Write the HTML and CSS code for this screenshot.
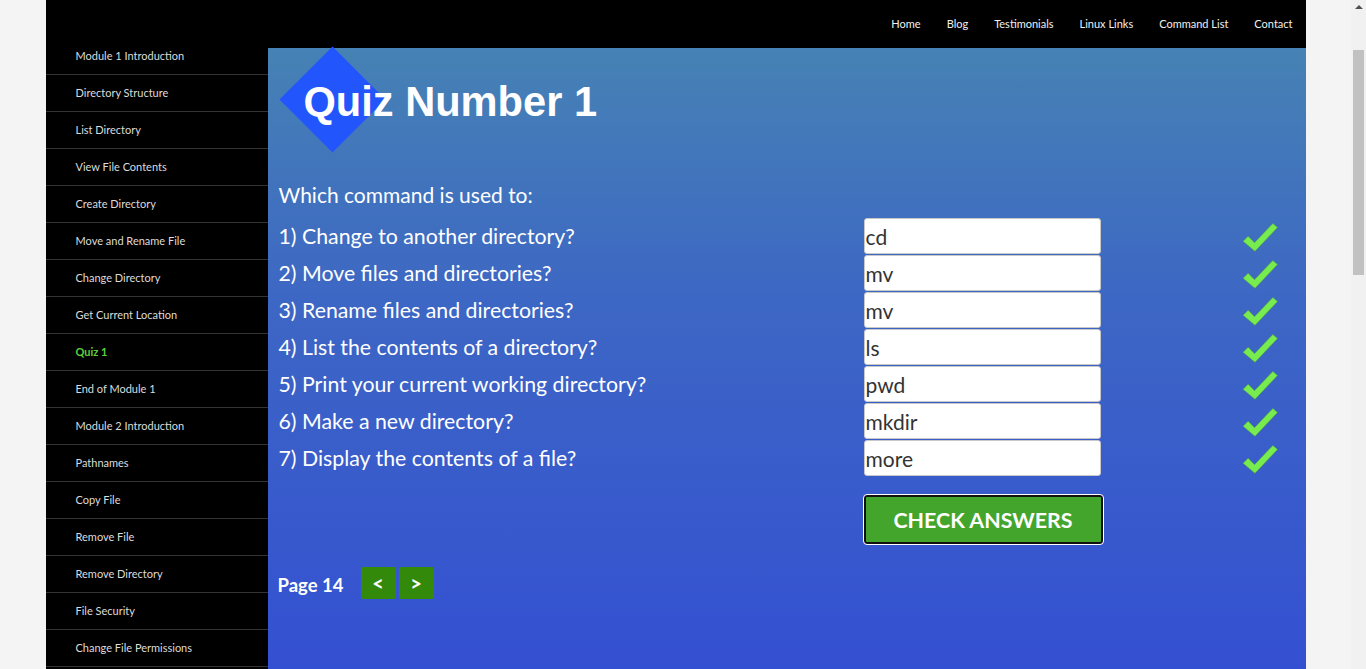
FILE: index.html
```html
<!DOCTYPE html>
<html lang="en">
<head>
<meta charset="utf-8">
<title>Quiz Number 1</title>
<link rel="stylesheet" href="styles.css">
</head>
<body>
<div class="viewport">
  <div class="page">
    <aside class="sidebar">
      <ul class="side-menu">
        <li><a href="#">Module 1 Introduction</a></li>
        <li><a href="#">Directory Structure</a></li>
        <li><a href="#">List Directory</a></li>
        <li><a href="#">View File Contents</a></li>
        <li><a href="#">Create Directory</a></li>
        <li><a href="#">Move and Rename File</a></li>
        <li><a href="#">Change Directory</a></li>
        <li><a href="#">Get Current Location</a></li>
        <li class="active"><a href="#">Quiz 1</a></li>
        <li><a href="#">End of Module 1</a></li>
        <li><a href="#">Module 2 Introduction</a></li>
        <li><a href="#">Pathnames</a></li>
        <li><a href="#">Copy File</a></li>
        <li><a href="#">Remove File</a></li>
        <li><a href="#">Remove Directory</a></li>
        <li><a href="#">File Security</a></li>
        <li><a href="#">Change File Permissions</a></li>
      </ul>
    </aside>
    <div class="main">
      <header class="topbar">
        <nav class="top-nav">
          <a href="#">Home</a>
          <a href="#">Blog</a>
          <a href="#">Testimonials</a>
          <a href="#">Linux Links</a>
          <a href="#">Command List</a>
          <a href="#">Contact</a>
        </nav>
      </header>
      <section class="content">
        <div class="title-wrap">
          <span class="diamond"></span>
          <h1 class="title">Quiz Number 1</h1>
        </div>
        <p class="intro">Which command is used to:</p>
        <div class="quiz">
          <div class="q">1) Change to another directory?</div>
          <input class="answer" type="text" value="cd">
          <div class="mark"><svg viewBox="0 0 40 36" class="tick"><path d="M1 21 L6.5 15.5 L13.5 22.5 L33.5 1.5 L38.5 6 L14 32 Z"/></svg></div>

          <div class="q">2) Move files and directories?</div>
          <input class="answer" type="text" value="mv">
          <div class="mark"><svg viewBox="0 0 40 36" class="tick"><path d="M1 21 L6.5 15.5 L13.5 22.5 L33.5 1.5 L38.5 6 L14 32 Z"/></svg></div>

          <div class="q">3) Rename files and directories?</div>
          <input class="answer" type="text" value="mv">
          <div class="mark"><svg viewBox="0 0 40 36" class="tick"><path d="M1 21 L6.5 15.5 L13.5 22.5 L33.5 1.5 L38.5 6 L14 32 Z"/></svg></div>

          <div class="q">4) List the contents of a directory?</div>
          <input class="answer" type="text" value="ls">
          <div class="mark"><svg viewBox="0 0 40 36" class="tick"><path d="M1 21 L6.5 15.5 L13.5 22.5 L33.5 1.5 L38.5 6 L14 32 Z"/></svg></div>

          <div class="q">5) Print your current working directory?</div>
          <input class="answer" type="text" value="pwd">
          <div class="mark"><svg viewBox="0 0 40 36" class="tick"><path d="M1 21 L6.5 15.5 L13.5 22.5 L33.5 1.5 L38.5 6 L14 32 Z"/></svg></div>

          <div class="q">6) Make a new directory?</div>
          <input class="answer" type="text" value="mkdir">
          <div class="mark"><svg viewBox="0 0 40 36" class="tick"><path d="M1 21 L6.5 15.5 L13.5 22.5 L33.5 1.5 L38.5 6 L14 32 Z"/></svg></div>

          <div class="q">7) Display the contents of a file?</div>
          <input class="answer" type="text" value="more">
          <div class="mark"><svg viewBox="0 0 40 36" class="tick"><path d="M1 21 L6.5 15.5 L13.5 22.5 L33.5 1.5 L38.5 6 L14 32 Z"/></svg></div>

          <div class="q"></div>
          <div class="check-cell"><button class="check-btn" type="button">CHECK ANSWERS</button></div>
          <div></div>
        </div>
        <div class="pager">
          <span class="page-label">Page 14</span>
          <a class="page-btn" href="#">&lt;</a>
          <a class="page-btn" href="#">&gt;</a>
        </div>
      </section>
    </div>
  </div>
</div>
<div class="scrollbar">
  <span class="sb-arrow"></span>
  <span class="sb-thumb"></span>
</div>
</body>
</html>
```

FILE: styles.css
```css
* { box-sizing: border-box; }
html, body { height: 100%; }
body {
  margin: 0;
  background: #f4f4f4;
  display: flex;
  overflow: hidden;
  font-family: Lato, "Open Sans", sans-serif;
}
.viewport {
  flex: 1;
  height: 669px;
  overflow: hidden;
}
.page {
  width: 1260px;
  margin: 0 auto;
  height: 100%;
  display: flex;
}
.sidebar {
  width: 222px;
  background: #000;
  padding-top: 38px;
  overflow: hidden;
}
.side-menu {
  list-style: none;
  margin: 0;
  padding: 0;
}
.side-menu li {
  height: 37px;
  border-bottom: 1px solid #333;
  display: flex;
  align-items: center;
  padding-bottom: 1px;
}
.side-menu a {
  padding-left: 30px;
  font-size: 11px;
  color: #dcdcdc;
  text-decoration: none;
}
.side-menu li.active a {
  color: #5fd23b;
  font-weight: bold;
}
.main {
  flex: 1;
  display: flex;
  flex-direction: column;
  min-width: 0;
}
.topbar {
  height: 48px;
  background: #000;
  display: flex;
  justify-content: flex-end;
  align-items: center;
  padding-bottom: 2px;
}
.top-nav {
  display: flex;
}
.top-nav a {
  padding: 0 13px;
  font-size: 11px;
  color: #f0f0f0;
  text-decoration: none;
}
.content {
  flex: 1;
  background: linear-gradient(to bottom, #4682b4 0%, #3d67c4 40%, #3450d2 100%);
  padding: 0 27px 0 11px;
  position: relative;
  color: #fff;
}
.title-wrap {
  height: 128px;
  position: relative;
  padding-top: 33px;
  padding-left: 25px;
}
.diamond {
  position: absolute;
  left: 16px;
  top: 14px;
  width: 75px;
  height: 75px;
  background: #2255fb;
  transform: rotate(45deg);
}
.title {
  position: relative;
  margin: 0;
  font-family: "Liberation Sans", Arial, sans-serif;
  font-weight: bold;
  font-size: 41.6px;
  line-height: 1;
  color: #fff;
}
.intro {
  margin: 0 0 5px;
  height: 37px;
  line-height: 37px;
  font-size: 21px;
}
.quiz {
  display: grid;
  grid-template-columns: 585px 237px 1fr;
  grid-auto-rows: 37px;
  align-items: center;
}
.q {
  font-size: 21.3px;
  line-height: 37px;
  padding-bottom: 1px;
}
.answer {
  width: 237px;
  height: 36px;
  align-self: start;
  border: 1px solid #c8c8c8;
  border-radius: 3px;
  background: #fff;
  padding: 0 0 0 1px;
  font-family: Lato, sans-serif;
  font-size: 21px;
  color: #333;
}
.mark {
  justify-self: end;
  height: 37px;
  display: flex;
  align-items: flex-end;
}
.tick {
  width: 37px;
  height: 33px;
  display: block;
}
.tick path {
  fill: #76ec4f;
  stroke: #5aa23a;
  stroke-width: 0.6;
}
.check-cell {
  align-self: start;
  padding-top: 18px;
}
.check-btn {
  width: 239px;
  height: 49px;
  background: #44a52c;
  border: 2px solid #111;
  border-radius: 3px;
  outline: 1px solid #fff;
  color: #fff;
  font-family: Lato, sans-serif;
  font-weight: bold;
  font-size: 21.4px;
  padding: 0;
}
.pager {
  margin-top: 53px;
  display: flex;
  align-items: center;
  margin-left: -1px;
}
.page-label {
  font-size: 18.5px;
  font-weight: bold;
  margin-right: 17px;
  padding-top: 3px;
}
.page-btn {
  width: 35px;
  height: 32px;
  margin-right: 3px;
  background: #338a0a;
  border-radius: 2px;
  color: #fff;
  font-weight: bold;
  font-size: 20px;
  text-decoration: none;
  display: flex;
  align-items: center;
  justify-content: center;
}
.scrollbar {
  width: 15px;
  height: 669px;
  background: #f1f1f1;
  display: flex;
  flex-direction: column;
  align-items: center;
}
.sb-arrow {
  margin-top: 5px;
  width: 0;
  height: 0;
  border-left: 4px solid transparent;
  border-right: 4px solid transparent;
  border-bottom: 4px solid #505050;
}
.sb-thumb {
  margin-top: 41px;
  width: 11px;
  height: 225px;
  background: #c1c1c1;
}
```
